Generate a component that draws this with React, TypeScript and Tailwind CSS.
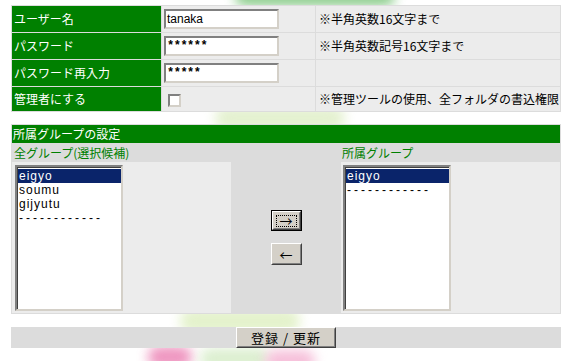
const font = "font-['Noto_Sans_CJK_JP','Liberation_Sans',sans-serif]";

const inset =
  "border-2 border-t-[#808080] border-l-[#808080] border-b-[#d4d0c8] border-r-[#d4d0c8] bg-white";

const FormRow = ({
  label,
  value,
  note,
  last,
}: {
  label: string;
  value?: string;
  note?: string;
  last?: boolean;
}) => (
  <>
    <div
      className={`bg-[#008000] text-white flex items-center pl-[2px] ${
        last ? "h-[24px]" : "h-[26px]"
      }`}
    >
      {label}
    </div>
    <div className="bg-[#ececec] flex items-center pl-[2px]">
      {value !== undefined ? (
        <div
          className={`${inset} w-[115px] h-[20px] flex items-center pl-[1px] text-black text-[12px] ${
            value.startsWith("*")
              ? "font-['Liberation_Mono',monospace] font-bold tracking-[-0.5px]"
              : "font-['Liberation_Sans',sans-serif]"
          }`}
        >
          {value}
        </div>
      ) : (
        <span className={`${inset} w-[13px] h-[13px] ml-[4px] mt-[2px]`} />
      )}
    </div>
    <div className="bg-[#ececec] flex items-center pl-[3px] text-black">
      {note}
    </div>
  </>
);

const ListBox = ({ items }: { items: string[] }) => (
  <div className="border-2 border-t-[#808080] border-l-[#808080] border-b-[#d4d0c8] border-r-[#d4d0c8] w-[108px] h-[146px] bg-white">
    <div className="border-l border-t border-l-[#404040] border-t-[#404040] h-full pt-[1px]">
      {items.map((item, i) => (
        <div
          key={i}
          className={`h-[14px] leading-[14px] pl-[1px] text-[12px] font-['Liberation_Sans',sans-serif] overflow-hidden ${
            item.startsWith("-") ? "tracking-[3px]" : "tracking-[1px]"
          } ${i === 0 ? "bg-[#0a246a] text-white" : "text-black"}`}
        >
          {item}
        </div>
      ))}
    </div>
  </div>
);

const ClassicButton = ({
  children,
  focused,
  className,
}: {
  children: React.ReactNode;
  focused?: boolean;
  className?: string;
}) => (
  <div
    className={`${
      focused ? "border border-black" : ""
    } ${className ?? ""} flex`}
  >
    <div className="flex-1 bg-[#d4d0c8] border border-t-white border-l-white border-b-[#404040] border-r-[#404040] flex">
      <div className="flex-1 border border-t-[#d4d0c8] border-l-[#d4d0c8] border-b-[#808080] border-r-[#808080] flex items-center justify-center">
        {focused ? (
          <div className="border border-dotted border-black w-[21px] h-[12px] flex items-center justify-center">
            {children}
          </div>
        ) : (
          children
        )}
      </div>
    </div>
  </div>
);

export default function App() {
  return (
    <div
      className={`relative w-[572px] h-[361px] bg-white overflow-hidden text-[12px] ${font}`}
    >
      {/* background flower blurs */}
      <div className="absolute left-[235px] top-[-12px] w-[160px] h-[18px] rounded-full bg-[#5cb85c] blur-[6px] opacity-70" />
      <div className="absolute left-[215px] top-[106px] w-[130px] h-[24px] rounded-full bg-[#e4f1d0] blur-[6px]" />
      <div className="absolute left-[180px] top-[308px] w-[120px] h-[26px] rounded-full bg-[#e4f2cc] blur-[6px]" />
      <div className="absolute left-[148px] top-[346px] w-[44px] h-[22px] rounded-full bg-[#e86aa6] blur-[6px] opacity-70" />
      <div className="absolute left-[200px] top-[348px] w-[70px] h-[22px] rounded-full bg-[#dcefd0] blur-[6px]" />
      <div className="absolute left-[265px] top-[350px] w-[50px] h-[22px] rounded-full bg-[#f6c0da] blur-[6px]" />

      <div className="relative pl-[11px] pt-[5px] flex flex-col w-[561px]">
        <div className="grid grid-cols-[149px_153px_244px] gap-px bg-[#dcdcdc] p-px">
          <FormRow label="ユーザー名" value="tanaka" note="※半角英数16文字まで" />
          <FormRow label="パスワード" value="******" note="※半角英数記号16文字まで" />
          <FormRow label="パスワード再入力" value="*****" />
          <FormRow
            label="管理者にする"
            note="※管理ツールの使用、全フォルダの書込権限"
            last
          />
        </div>

        <div className="mt-[12px] bg-[#dcdcdc] p-px flex flex-col">
          <div className="bg-[#008000] text-white h-[18px] flex items-center pl-[1px]">
            所属グループの設定
          </div>
          <div className="grid grid-cols-[219px_110px_219px]">
            <div className="h-[19px] flex items-center pl-[2px] text-[#008000]">
              全グループ(選択候補)
            </div>
            <div />
            <div className="h-[19px] flex items-center pl-[1px] text-[#008000]">
              所属グループ
            </div>
            <div className="bg-[#ececec] pl-[3px] pt-[3px] pb-[2px]">
              <ListBox items={["eigyo", "soumu", "gijyutu", "------------"]} />
            </div>
            <div className="flex flex-col items-center justify-center gap-[12px] text-black">
              <ClassicButton focused className="w-[31px] h-[21px]">
                <span className="text-[13px] leading-none">→</span>
              </ClassicButton>
              <ClassicButton className="w-[31px] h-[22px]">
                <span className="text-[13px] leading-none">←</span>
              </ClassicButton>
            </div>
            <div className="bg-[#ececec] pl-[2px] pt-[3px] pb-[2px]">
              <ListBox items={["eigyo", "------------"]} />
            </div>
          </div>
        </div>

        <div className="mt-[13px] bg-[#dcdcdc] h-[21px] w-[550px] flex justify-center">
          <ClassicButton className="w-[100px] h-[21px]">
            <span className="text-[13px] tracking-[1px] text-black">登録 / 更新</span>
          </ClassicButton>
        </div>
      </div>
    </div>
  );
}
